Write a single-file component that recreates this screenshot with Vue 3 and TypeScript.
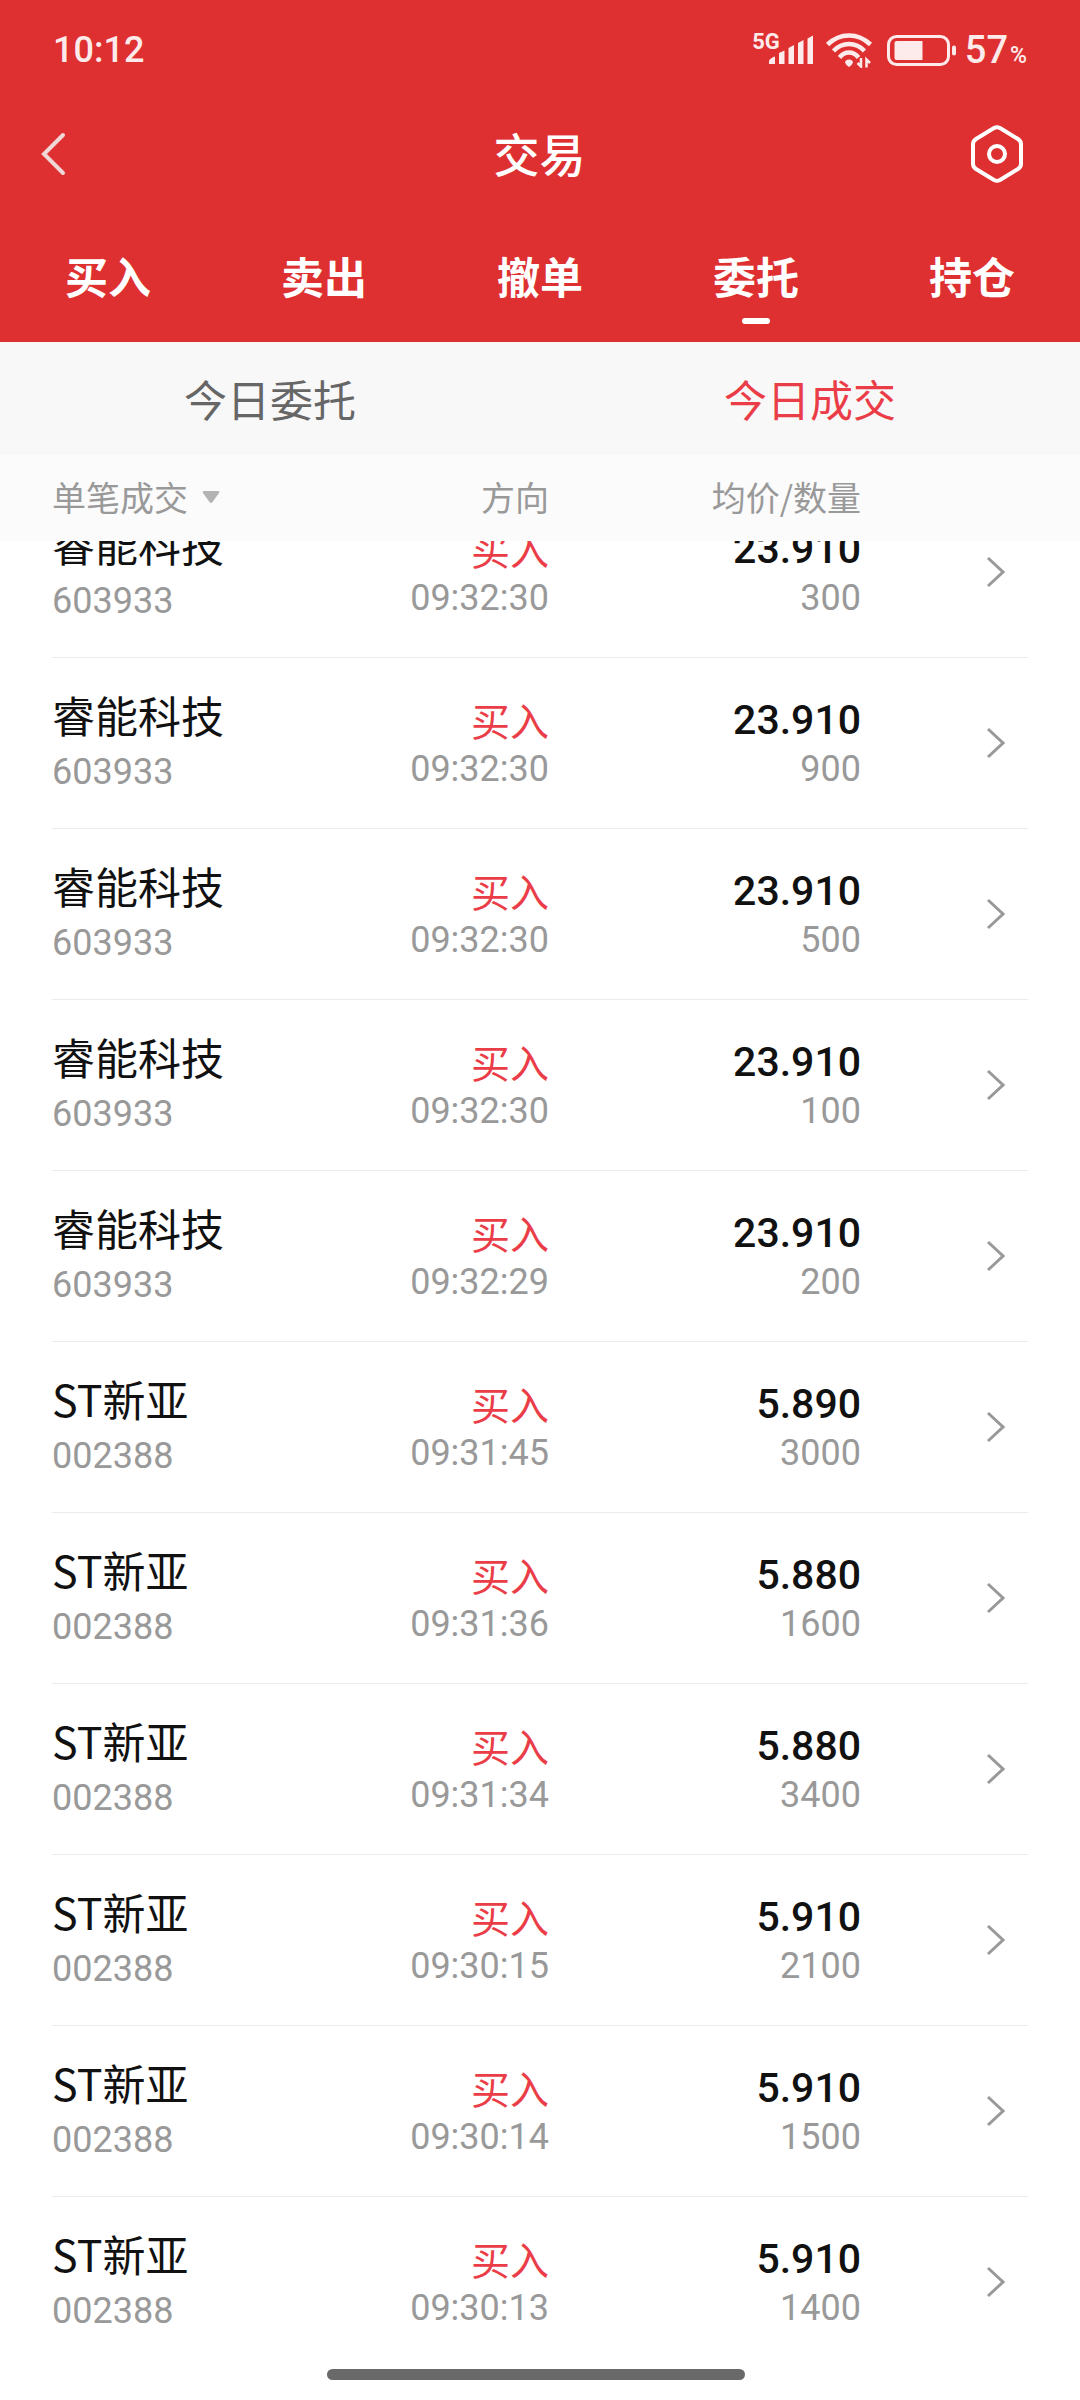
<script setup lang="ts">
import { onMounted, ref } from 'vue'

interface Trade {
  name: string
  code: string
  side: string
  time: string
  price: string
  qty: number
}

const mainTabs: string[] = ['买入', '卖出', '撤单', '委托', '持仓']
const subTabs: string[] = ['今日委托', '今日成交']
const activeMain = ref('委托')
const activeSub = ref('今日成交')

const ruineng = (time: string, qty: number): Trade => ({
  name: '睿能科技', code: '603933', side: '买入', time, price: '23.910', qty,
})
const xinya = (time: string, price: string, qty: number): Trade => ({
  name: 'ST新亚', code: '002388', side: '买入', time, price, qty,
})

const trades: Trade[] = [
  ruineng('09:32:30', 300),
  ruineng('09:32:30', 900),
  ruineng('09:32:30', 500),
  ruineng('09:32:30', 100),
  ruineng('09:32:29', 200),
  xinya('09:31:45', '5.890', 3000),
  xinya('09:31:36', '5.880', 1600),
  xinya('09:31:34', '5.880', 3400),
  xinya('09:30:15', '5.910', 2100),
  xinya('09:30:14', '5.910', 1500),
  xinya('09:30:13', '5.910', 1400),
]

// The list opens slightly scrolled, so the first row slides under the column heads.
const scroller = ref<HTMLElement | null>(null)
onMounted(() => {
  if (scroller.value) scroller.value.scrollTop = 54
})
</script>

<template>
  <div class="page">
    <header class="top">
      <div class="status">
        <span class="clock">10:12</span>
        <div class="indicators">
          <span class="net">5G</span>
          <svg class="signal" width="44" height="30" viewBox="0 0 44 30" fill="currentColor" aria-hidden="true">
            <path d="M0 29V26Q1 23 6 21.500V29ZM10 29V18L15.500 15.500V29ZM19.500 29V13L25 10V29ZM29 29V8L34.500 5V29ZM38.500 29V3.500L44 0.500V29Z" />
          </svg>
          <svg class="wifi" width="48" height="36" viewBox="0 0 48 36" aria-hidden="true">
            <g fill="none" stroke="currentColor" stroke-width="4.500">
              <path d="M2.500 12.500Q12 3.500 24 3.500T45.500 12.500" />
              <path d="M8.500 19Q15 12 24 12T39.500 19" />
              <path d="M14.500 25.500Q18.500 20.500 24 20.500T33.500 25.500" />
            </g>
            <path d="M20 30.500Q20.500 27.500 24 27.500Q27.500 27.500 28 30.500Q27 33.500 24 35Q21 33.500 20 30.500Z" fill="currentColor" />
            <path d="M36 26V34.500L32.500 31M41.500 35.500V27.500L45 31" fill="none" stroke="currentColor" stroke-width="2.500" />
          </svg>
          <svg class="battery" width="70" height="32" viewBox="0 0 70 32" aria-hidden="true">
            <rect x="1.500" y="2.500" width="60" height="28" rx="8" fill="none" stroke="currentColor" stroke-width="3" />
            <path d="M9.500 7H35.500V26H9.500Q7.500 26 7.500 24V9Q7.500 7 9.500 7Z" fill="currentColor" />
            <rect x="65" y="11.500" width="4" height="10" rx="2" fill="currentColor" />
          </svg>
          <span class="level">57<small>%</small></span>
        </div>
      </div>

      <div class="titlebar">
        <button class="icon-btn" type="button" aria-label="返回">
          <svg width="26" height="46" viewBox="0 0 26 46" fill="none" stroke="#f0d6d6" stroke-width="4" stroke-linecap="round" aria-hidden="true">
            <path d="M23 4L4 23L23 42" />
          </svg>
        </button>
        <h1>交易</h1>
        <button class="icon-btn end" type="button" aria-label="设置">
          <svg width="54" height="60" viewBox="0 0 54 60" fill="none" stroke="#fff" stroke-width="4" stroke-linejoin="round" aria-hidden="true">
            <path d="M24 4Q27 2.500 30 4L48 15Q51 17 51 20V40Q51 43 48 45L30 56Q27 57.500 24 56L6 45Q3 43 3 40V20Q3 17 6 15Z" />
            <circle cx="27" cy="30" r="8" />
          </svg>
        </button>
      </div>

      <nav class="main-tabs">
        <button
          v-for="tab in mainTabs"
          :key="tab"
          type="button"
          :class="{ active: tab === activeMain }"
          @click="activeMain = tab"
        >{{ tab }}</button>
      </nav>
    </header>

    <nav class="sub-tabs">
      <button
        v-for="tab in subTabs"
        :key="tab"
        type="button"
        :class="{ active: tab === activeSub }"
        @click="activeSub = tab"
      >{{ tab }}</button>
    </nav>

    <main ref="scroller" class="scroller">
      <table>
        <thead>
          <tr>
            <th scope="col">
              <button class="filter" type="button">
                单笔成交
                <svg width="18" height="14" viewBox="0 0 18 14" fill="#b3b3b3" aria-hidden="true">
                  <path d="M2 1H16Q18 1 17 3L10.500 12Q9 14 7.500 12L1 3Q0 1 2 1Z" />
                </svg>
              </button>
            </th>
            <th scope="col">方向</th>
            <th scope="col">均价/数量</th>
            <th></th>
          </tr>
        </thead>
        <tbody>
          <tr v-for="(t, i) in trades" :key="i">
            <td class="stock">
              <div class="name">{{ t.name }}</div>
              <div class="num">{{ t.code }}</div>
            </td>
            <td>
              <div class="side">{{ t.side }}</div>
              <div class="num">{{ t.time }}</div>
            </td>
            <td>
              <div class="price">{{ t.price }}</div>
              <div class="num">{{ t.qty }}</div>
            </td>
            <td class="more">
              <button class="icon-btn" type="button" aria-label="详情">
                <svg width="20" height="34" viewBox="0 0 20 34" fill="none" stroke="#999" stroke-width="3" aria-hidden="true">
                  <path d="M3 3L18 17L3 31" />
                </svg>
              </button>
            </td>
          </tr>
        </tbody>
      </table>
    </main>

    <div class="home-bar"></div>
  </div>
</template>

<style>
body {
  margin: 0;
  background: #fff;
}
</style>

<style scoped>
.page {
  position: relative;
  display: flex;
  flex-direction: column;
  height: 100vh;
  overflow: hidden;
  font-family: "Noto Sans CJK SC", sans-serif;
  color: #111;
}

button {
  padding: 0;
  border: 0;
  background: none;
  font: inherit;
  color: inherit;
  cursor: pointer;
}

svg {
  display: block;
}

.top {
  flex: none;
  background: #de3031;
  color: #fff;
}

.status {
  display: flex;
  align-items: center;
  justify-content: space-between;
  height: 100px;
  padding: 0 53px;
  font-family: Roboto, sans-serif;
  font-weight: 500;
  color: #fdeaea;
}

.clock {
  font-size: 36px;
  line-height: 40px;
}

.indicators {
  display: flex;
  align-items: center;
}

.net {
  align-self: flex-start;
  margin-right: -11px;
  font-size: 22px;
  font-weight: 700;
  line-height: 24px;
}

.wifi {
  margin-left: 12px;
}

.battery {
  margin: 0 8px 0 14px;
}

.level {
  display: flex;
  align-items: baseline;
  gap: 2px;
  font-size: 38px;
  line-height: 40px;
}

.level small {
  font-size: 23px;
  line-height: 24px;
}

.titlebar {
  display: grid;
  grid-template-columns: 1fr auto 1fr;
  align-items: center;
  height: 108px;
  padding: 0 56px 0 40px;
}

.icon-btn {
  display: flex;
}

.end {
  justify-self: end;
}

h1 {
  margin: 0 0 4px 15px;
  font-size: 46px;
  font-weight: 500;
  line-height: 60px;
}

.main-tabs {
  display: flex;
  height: 134px;
}

.main-tabs button {
  position: relative;
  flex: 1;
  font-size: 43px;
  font-weight: 700;
  line-height: 132px;
}

.main-tabs .active::after {
  content: "";
  position: absolute;
  bottom: 18px;
  left: 50%;
  width: 28px;
  height: 6px;
  margin-left: -14px;
  border-radius: 3px;
  background: #fff;
}

.sub-tabs {
  display: flex;
  flex: none;
  height: 113px;
  background: #f8f8f8;
  font-size: 43px;
  line-height: 60px;
  color: #666;
}

.sub-tabs button {
  flex: 1;
  padding-bottom: 2px;
}

.sub-tabs .active {
  color: #ea3d47;
}

.scroller {
  flex: 1;
  min-height: 0;
  overflow-y: auto;
  scrollbar-width: none;
}

table,
thead,
tbody {
  display: block;
}

table {
  padding-bottom: 80px;
}

thead {
  position: sticky;
  top: 0;
  z-index: 1;
  background: #fbfbfb;
  color: #999;
}

tr {
  display: grid;
  grid-template-columns: 248fr 249fr 312fr 167fr;
  align-items: center;
  margin: 0 52px;
}

thead tr {
  height: 86px;
}

tbody tr {
  height: 170px;
  border-bottom: 1px solid #ebebeb;
}

tbody tr:last-child {
  border-bottom: 0;
}

th,
td {
  padding: 0;
  text-align: right;
  font-weight: 400;
}

th {
  padding-bottom: 2px;
  font-size: 34px;
  line-height: 50px;
}

td {
  padding-top: 2px;
}

.filter {
  display: flex;
  align-items: center;
  gap: 14px;
}

.stock {
  text-align: left;
}

.name {
  font-size: 43px;
  line-height: 56px;
}

.stock .num {
  line-height: 60px;
}

.num {
  font-family: Roboto, sans-serif;
  font-size: 36px;
  line-height: 50px;
  color: #999;
}

.side {
  font-size: 39px;
  line-height: 50px;
  color: #ea3d47;
}

.price {
  padding-top: 2px;
  font-family: Roboto, sans-serif;
  font-size: 41px;
  font-weight: 500;
  line-height: 48px;
}

.more {
  display: flex;
  justify-content: flex-end;
  padding: 0 23px 0 0;
}

.home-bar {
  position: absolute;
  bottom: 20px;
  left: 50%;
  width: 418px;
  height: 11px;
  margin-left: -213px;
  border-radius: 6px;
  background: #696969;
}
</style>
